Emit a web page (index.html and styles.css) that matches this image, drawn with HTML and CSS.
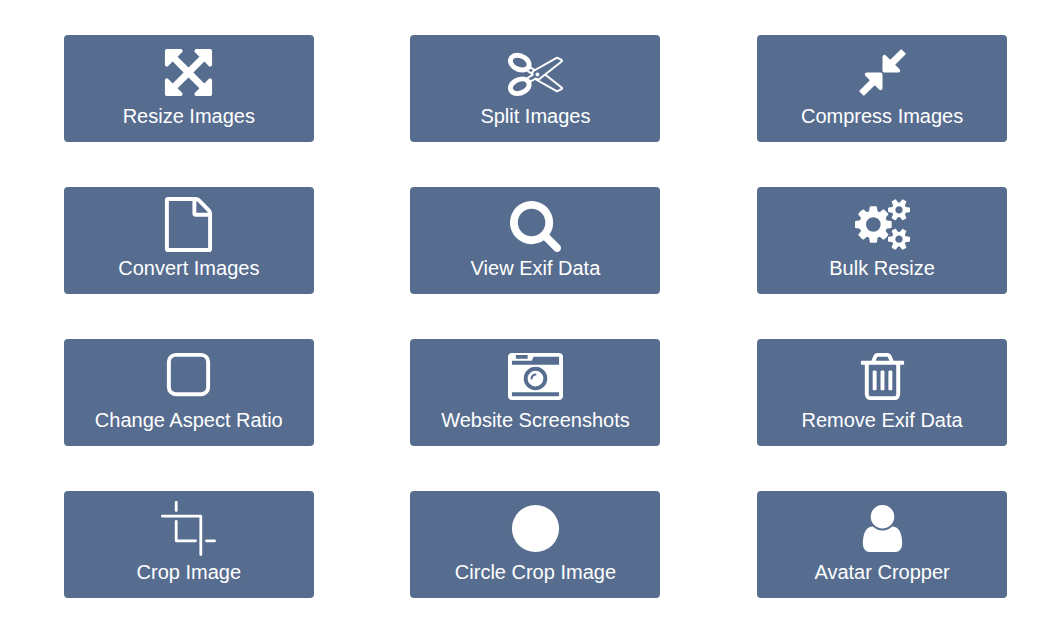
FILE: index.html
```
<!DOCTYPE html>
<html lang="en">
<head>
    <meta charset="UTF-8">
    <meta name="viewport" content="width=device-width, initial-scale=1.0">
    <title>Image Tools</title>
    <link rel="stylesheet" href="styles.css">
</head>
<body>
    <div class="tools">
        <a class="tool" href="#">
            <svg class="icon" viewBox="0 0 1792 1792"><path d="M1411 541l-355 355 355 355 144-144q29-31 70-14 39 17 39 59v448q0 26-19 45t-45 19h-448q-42 0-59-40-17-39 14-69l144-144-355-355-355 355 144 144q31 30 14 69-17 40-59 40h-448q-26 0-45-19t-19-45v-448q0-42 40-59 39-17 69 14l144 144 355-355-355-355-144 144q-19 19-45 19-12 0-24-5-40-17-40-59v-448q0-26 19-45t45-19h448q42 0 59 40 17 39-14 69l-144 144 355 355 355-355-144-144q-31-30-14-69 17-40 59-40h448q26 0 45 19t19 45v448q0 42-39 59-13 5-25 5-26 0-45-19z"/></svg>
            <span>Resize Images</span>
        </a>
        <a class="tool" href="#">
            <svg class="icon" viewBox="0 0 1792 1792"><path d="M960 896q26 0 45 19t19 45-19 45-45 19-45-19-19-45 19-45 45-19zm300 64l507 398q28 20 25 56-5 35-35 51l-128 64q-13 7-29 7-17 0-31-8l-690-387-110 66q-8 4-12 5 14 49 10 97-7 77-56 147.500t-132 123.500q-132 84-277 84-136 0-222-78-90-84-79-207 7-76 56-147t131-124q132-84 278-84 83 0 151 31 9-13 22-22l122-73-122-73q-13-9-22-22-68 31-151 31-146 0-278-84-82-53-131-124t-56-147q-5-59 15.500-113t63.500-93q85-79 222-79 145 0 277 84 83 52 132 123t56 148q4 48-10 97 4 1 12 5l110 66 690-387q14-8 31-8 16 0 29 7l128 64q30 16 35 51 3 36-25 56zm-681-260q46-42 21-108t-106-117q-92-59-192-59-74 0-113 36-46 42-21 108t106 117q92 59 192 59 74 0 113-36zm-85 745q81-51 106-117t-21-108q-39-36-113-36-100 0-192 59-81 51-106 117t21 108q39 36 113 36 100 0 192-59zm178-613l96 58v-11q0-36 33-56l14-8-79-44-26 26q-3 3-10 11t-12 12q-2 2-4 3.500t-3 2.500zm224 224l96 32 736-576-128-64-768 431v113l-160 96 9 8q2 2 7 6 4 4 11 12t11 12l26 26zm704 416l128-64-520-408-177 138q-2 3-13 7z"/></svg>
            <span>Split Images</span>
        </a>
        <a class="tool" href="#">
            <svg class="icon" viewBox="0 0 1792 1792"><path d="M896 960v448q0 26-19 45t-45 19-45-19l-144-144-332 332q-10 10-23 10t-23-10l-114-114q-10-10-10-23t10-23l332-332-144-144q-19-19-19-45t19-45 45-19h448q26 0 45 19t19 45zm755-672q0 13-10 23l-332 332 144 144q19 19 19 45t-19 45-45 19h-448q-26 0-45-19t-19-45v-448q0-26 19-45t45-19 45 19l144 144 332-332q10-10 23-10t23 10l114 114q10 10 10 23z"/></svg>
            <span>Compress Images</span>
        </a>
        <a class="tool" href="#">
            <svg class="icon" viewBox="0 0 1792 1792"><path d="M1596 380q28 28 48 76t20 88v1152q0 40-28 68t-68 28h-1344q-40 0-68-28t-28-68v-1600q0-40 28-68t68-28h896q40 0 88 20t76 48zm-444-244v376h376q-10-29-22-41l-313-313q-12-12-41-22zm384 1528v-1024h-416q-40 0-68-28t-28-68v-416h-768v1536h1280z"/></svg>
            <span>Convert Images</span>
        </a>
        <a class="tool" href="#">
            <svg class="icon" viewBox="0 0 1792 1792"><path d="M1216 832q0-185-131.500-316.500t-316.500-131.500-316.500 131.500-131.500 316.500 131.500 316.500 316.500 131.500 316.500-131.500 131.500-316.500zm512 832q0 52-38 90t-90 38q-54 0-90-38l-343-342q-179 124-399 124-143 0-273.500-55.500t-225-150-150-225-55.500-273.500 55.500-273.500 150-225 225-150 273.500-55.500 273.500 55.500 225 150 150 225 55.500 273.500q0 220-124 399l343 343q37 37 37 90z"/></svg>
            <span>View Exif Data</span>
        </a>
        <a class="tool" href="#">
            <svg class="icon" viewBox="0 -64 1920 1920"><path d="M896 896q0-106-75-181t-181-75-181 75-75 181 75 181 181 75 181-75 75-181zm768 512q0-52-38-90t-90-38-90 38-38 90q0 53 37.500 90.500t90.500 37.500 90.500-37.500 37.500-90.500zm0-1024q0-52-38-90t-90-38-90 38-38 90q0 53 37.500 90.500t90.500 37.500 90.500-37.500 37.500-90.500zm-384 421v185q0 10-7 19.500t-16 10.500l-155 24q-11 35-32 76 34 48 90 115 7 11 7 20 0 12-7 19-23 30-82.500 89.500t-78.500 59.500q-11 0-21-7l-115-90q-37 19-77 31-11 108-23 155-7 24-30 24h-186q-11 0-20-7.500t-10-17.500l-23-153q-34-10-75-31l-118 89q-7 7-20 7-11 0-21-8-144-133-144-160 0-9 7-19 10-14 41-53t47-61q-23-44-35-82l-152-24q-10-1-17-9.500t-7-19.500v-185q0-10 7-19.500t16-10.500l155-24q11-35 32-76-34-48-90-115-7-11-7-20 0-12 7-20 22-30 82-89t79-59q11 0 21 7l115 90q34-18 77-32 11-108 23-154 7-24 30-24h186q11 0 20 7.500t10 17.500l23 153q34 10 75 31l118-89q8-7 20-7 11 0 21 8 144 133 144 160 0 8-7 19-12 16-42 54t-45 60q23 48 34 82l152 23q10 2 17 10.500t7 19.500zm640 533v140q0 16-149 31-12 27-30 52 51 113 51 138 0 4-4 7-122 71-124 71-8 0-46-47t-52-68q-20 2-30 2t-30-2q-14 21-52 68t-46 47q-2 0-124-71-4-3-4-7 0-25 51-138-18-25-30-52-149-15-149-31v-140q0-16 149-31 13-29 30-52-51-113-51-138 0-4 4-7 4-2 35-20t59-34 30-16q8 0 46 46.500t52 67.500q20-2 30-2t30 2q51-71 92-112l6-2q4 0 124 70 4 3 4 7 0 25-51 138 17 23 30 52 149 15 149 31zm0-1024v140q0 16-149 31-12 27-30 52 51 113 51 138 0 4-4 7-122 71-124 71-8 0-46-47t-52-68q-20 2-30 2t-30-2q-14 21-52 68t-46 47q-2 0-124-71-4-3-4-7 0-25 51-138-18-25-30-52-149-15-149-31v-140q0-16 149-31 13-29 30-52-51-113-51-138 0-4 4-7 4-2 35-20t59-34 30-16q8 0 46 46.500t52 67.500q20-2 30-2t30 2q51-71 92-112l6-2q4 0 124 70 4 3 4 7 0 25-51 138 17 23 30 52 149 15 149 31z"/></svg>
            <span>Bulk Resize</span>
        </a>
        <a class="tool" href="#">
            <svg class="icon" viewBox="0 0 1792 1792"><path d="M1312 256h-832q-66 0-113 47t-47 113v832q0 66 47 113t113 47h832q66 0 113-47t47-113v-832q0-66-47-113t-113-47zm288 160v832q0 119-84.500 203.500t-203.500 84.500h-832q-119 0-203.500-84.500t-84.500-203.500v-832q0-119 84.500-203.500t203.500-84.500h832q119 0 203.500 84.500t84.500 203.500z"/></svg>
            <span>Change Aspect Ratio</span>
        </a>
        <a class="tool" href="#">
            <svg class="icon" viewBox="0 0 1792 1792"><path d="M928 832q0-14-9-23t-23-9q-66 0-113 47t-47 113q0 14 9 23t23 9 23-9 9-23q0-40 28-68t68-28q14 0 23-9t9-23zm224 130q0 106-75 181t-181 75-181-75-75-181 75-181 181-75 181 75 75 181zm-1024 574h1536v-128h-1536v128zm1152-574q0-159-112.500-271.500t-271.500-112.500-271.500 112.500-112.500 271.500 112.500 271.500 271.500 112.500 271.500-112.500 112.500-271.500zm-1024-642h384v-128h-384v128zm-128 192h1536v-256h-828l-64 128h-644v128zm1664-256v1280q0 53-37.500 90.500t-90.500 37.500h-1536q-53 0-90.500-37.500t-37.500-90.500v-1280q0-53 37.500-90.500t90.500-37.500h1536q53 0 90.500 37.500t37.500 90.500z"/></svg>
            <span>Website Screenshots</span>
        </a>
        <a class="tool" href="#">
            <svg class="icon" viewBox="0 0 1792 1792"><path d="M704 736v576q0 14-9 23t-23 9h-64q-14 0-23-9t-9-23v-576q0-14 9-23t23-9h64q14 0 23 9t9 23zm256 0v576q0 14-9 23t-23 9h-64q-14 0-23-9t-9-23v-576q0-14 9-23t23-9h64q14 0 23 9t9 23zm256 0v576q0 14-9 23t-23 9h-64q-14 0-23-9t-9-23v-576q0-14 9-23t23-9h64q14 0 23 9t9 23zm128 724v-948h-896v948q0 22 7 40.500t14.500 27 10.500 8.500h832q3 0 10.500-8.500t14.500-27 7-40.500zm-672-1076h448l-48-117q-7-9-17-11h-317q-10 2-17 11zm928 32v64q0 14-9 23t-23 9h-96v948q0 83-47 143.500t-113 60.500h-832q-66 0-113-58.500t-47-141.500v-952h-96q-14 0-23-9t-9-23v-64q0-14 9-23t23-9h309l70-167q15-37 54-63t79-26h320q40 0 79 26t54 63l70 167h309q14 0 23 9t9 23z"/></svg>
            <span>Remove Exif Data</span>
        </a>
        <a class="tool" href="#">
            <svg class="icon icon-line" viewBox="0 0 55 55"><path d="M15.200 1.300V9.500M1.400 15.200H39.800V53.600M15.200 20.500V39.800H34.500M45.500 39.800H53.600"/></svg>
            <span>Crop Image</span>
        </a>
        <a class="tool" href="#">
            <svg class="icon" viewBox="0 0 1792 1792"><circle cx="896" cy="896" r="768"/></svg>
            <span>Circle Crop Image</span>
        </a>
        <a class="tool" href="#">
            <svg class="icon" viewBox="0 0 1792 1792"><path d="M1536 1399q0 109-62.500 187t-150.500 78h-854q-88 0-150.500-78t-62.500-187q0-85 8.500-160.500t31.500-152 58.500-131 94-89 134.500-34.500q131 128 313 128t313-128q76 0 134.500 34.500t94 89 58.500 131 31.500 152 8.500 160.500zm-256-887q0 159-112.500 271.500t-271.500 112.500-271.500-112.500-112.500-271.500 112.500-271.500 271.500-112.500 271.500 112.500 112.500 271.500z"/></svg>
            <span>Avatar Cropper</span>
        </a>
    </div>
</body>
</html>
```
FILE: styles.css
```
body {
    font-family: "Liberation Sans", Arial, sans-serif;
    background-color: white;
    margin: 0;
}
.tools {
    display: grid;
    grid-template-columns: repeat(3, 250px);
    column-gap: 96.65px;
    row-gap: 45px;
    padding: 35px 0 0 63.8px;
}
.tool {
    display: flex;
    flex-direction: column;
    align-items: center;
    box-sizing: border-box;
    height: 107px;
    padding-top: 10px;
    background-color: #576d8f;
    border-radius: 4px;
    color: white;
    font-size: 20px;
    line-height: 30px;
    text-decoration: none;
}
.tool span {
    margin-top: 1px;
}
.icon {
    width: 55px;
    height: 55px;
    fill: white;
}
.icon-line {
    fill: none;
    stroke: white;
    stroke-width: 2.8;
    stroke-linecap: round;
    stroke-linejoin: round;
}
```
